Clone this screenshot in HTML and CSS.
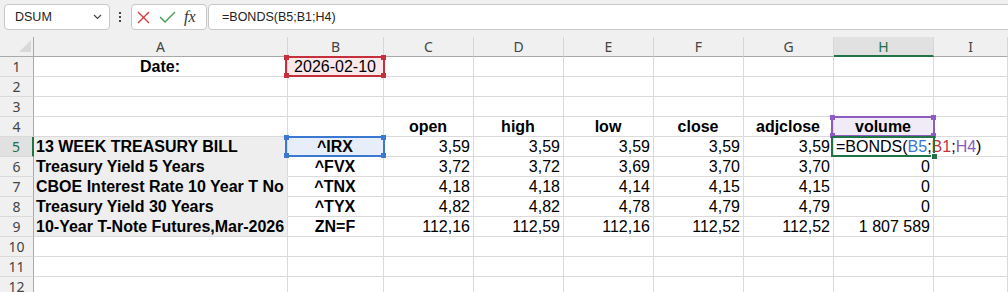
FILE: index.html
```html
<!DOCTYPE html>
<html lang="en">
<head>
    <meta charset="UTF-8">
    <meta name="viewport" content="width=device-width, initial-scale=1.0">
    <title>Bonds sheet</title>
    <link rel="stylesheet" href="styles.css">
</head>
<body>
    <div class="formula-bar">
        <div class="name-box">
            <span>DSUM</span>
            <svg class="chev" width="9" height="6" viewBox="0 0 9 6"><path d="M1 1l3.5 3.5L8 1" fill="none" stroke="#444" stroke-width="1.2"/></svg>
        </div>
        <div class="more"><i></i><i></i><i></i></div>
        <div class="fx-box">
            <svg class="cancel" width="13" height="13" viewBox="0 0 13 13"><path d="M1 1l11 11M12 1L1 12" stroke="#d6393f" stroke-width="1.4"/></svg>
            <svg class="enter" width="17" height="12" viewBox="0 0 17 12"><path d="M1 6l5 5L16 1" fill="none" stroke="#3f9f4a" stroke-width="1.4"/></svg>
            <span class="fx">fx</span>
        </div>
        <div class="formula-input">=BONDS(B5;B1;H4)</div>
    </div>

    <div class="sheet">
        <div class="row">
            <div class="corner"></div>
            <div class="ch">A</div><div class="ch">B</div><div class="ch">C</div><div class="ch">D</div><div class="ch">E</div>
            <div class="ch">F</div><div class="ch">G</div><div class="ch sel">H</div><div class="ch">I</div>
        </div>
        <div class="row">
            <div class="rh">1</div>
            <div class="c b ctr">Date:</div>
            <div class="c ctr pink over">2026-02-10
                <div class="ref red"><i class="k tl"></i><i class="k tr"></i><i class="k bl"></i><i class="k br"></i></div>
            </div>
            <div class="c"></div><div class="c"></div><div class="c"></div><div class="c"></div><div class="c"></div><div class="c"></div><div class="c"></div>
        </div>
        <div class="row">
            <div class="rh">2</div>
            <div class="c"></div><div class="c"></div><div class="c"></div><div class="c"></div><div class="c"></div><div class="c"></div><div class="c"></div><div class="c"></div><div class="c"></div>
        </div>
        <div class="row">
            <div class="rh">3</div>
            <div class="c"></div><div class="c"></div><div class="c"></div><div class="c"></div><div class="c"></div><div class="c"></div><div class="c"></div><div class="c"></div><div class="c"></div>
        </div>
        <div class="row">
            <div class="rh">4</div>
            <div class="c"></div><div class="c"></div>
            <div class="c b ctr">open</div>
            <div class="c b ctr">high</div>
            <div class="c b ctr">low</div>
            <div class="c b ctr">close</div>
            <div class="c b ctr">adjclose</div>
            <div class="c b ctr lilac over">volume
                <div class="ref purple"><i class="k tl"></i><i class="k tr"></i><i class="k bl"></i><i class="k br"></i></div>
            </div>
            <div class="c"></div>
        </div>
        <div class="row">
            <div class="rh sel">5</div>
            <div class="c b grey">13 WEEK TREASURY BILL</div>
            <div class="c b ctr blue-fill over">^IRX
                <div class="ref blue"><i class="k tl"></i><i class="k tr"></i><i class="k bl"></i><i class="k br"></i></div>
            </div>
            <div class="c num">3,59</div><div class="c num">3,59</div><div class="c num">3,59</div><div class="c num">3,59</div><div class="c num">3,59</div>
            <div class="c over active">=BONDS(<span class="t-blue">B5</span>;<span class="t-red">B1</span>;<span class="t-purple">H4</span>)
                <div class="cursor"><i class="handle"></i></div>
            </div>
            <div class="c"></div>
        </div>
        <div class="row">
            <div class="rh">6</div>
            <div class="c b grey">Treasury Yield 5 Years</div>
            <div class="c b ctr">^FVX</div>
            <div class="c num">3,72</div><div class="c num">3,72</div><div class="c num">3,69</div><div class="c num">3,70</div><div class="c num">3,70</div>
            <div class="c num">0</div>
            <div class="c"></div>
        </div>
        <div class="row">
            <div class="rh">7</div>
            <div class="c b grey">CBOE Interest Rate 10 Year T No</div>
            <div class="c b ctr">^TNX</div>
            <div class="c num">4,18</div><div class="c num">4,18</div><div class="c num">4,14</div><div class="c num">4,15</div><div class="c num">4,15</div>
            <div class="c num">0</div>
            <div class="c"></div>
        </div>
        <div class="row">
            <div class="rh">8</div>
            <div class="c b grey">Treasury Yield 30 Years</div>
            <div class="c b ctr">^TYX</div>
            <div class="c num">4,82</div><div class="c num">4,82</div><div class="c num">4,78</div><div class="c num">4,79</div><div class="c num">4,79</div>
            <div class="c num">0</div>
            <div class="c"></div>
        </div>
        <div class="row">
            <div class="rh">9</div>
            <div class="c b grey last">10-Year T-Note Futures,Mar-2026</div>
            <div class="c b ctr">ZN=F</div>
            <div class="c num">112,16</div><div class="c num">112,59</div><div class="c num">112,16</div><div class="c num">112,52</div><div class="c num">112,52</div>
            <div class="c num">1 807 589</div>
            <div class="c"></div>
        </div>
        <div class="row">
            <div class="rh">10</div>
            <div class="c"></div><div class="c"></div><div class="c"></div><div class="c"></div><div class="c"></div><div class="c"></div><div class="c"></div><div class="c"></div><div class="c"></div>
        </div>
        <div class="row">
            <div class="rh">11</div>
            <div class="c"></div><div class="c"></div><div class="c"></div><div class="c"></div><div class="c"></div><div class="c"></div><div class="c"></div><div class="c"></div><div class="c"></div>
        </div>
        <div class="row">
            <div class="rh">12</div>
            <div class="c"></div><div class="c"></div><div class="c"></div><div class="c"></div><div class="c"></div><div class="c"></div><div class="c"></div><div class="c"></div><div class="c"></div>
        </div>
    </div>
</body>
</html>
```

FILE: styles.css
```css
body {
    margin: 0;
    background-color: #f0f0f0;
    font-family: "Liberation Sans", Arial, sans-serif;
    color: #000;
    overflow: hidden;
}

/* formula bar */
.formula-bar {
    display: flex;
    align-items: flex-start;
    height: 37px;
    padding: 4px 0 0 4px;
    box-sizing: border-box;
}
.name-box, .fx-box, .formula-input {
    height: 26px;
    box-sizing: border-box;
    border: 1px solid #c8c8c8;
    border-radius: 4px;
    background-color: #fff;
}
.name-box {
    width: 106px;
    display: flex;
    align-items: center;
    justify-content: space-between;
    padding: 0 7px 0 10px;
    font-size: 12.5px;
    color: #222;
}
.more {
    width: 19px;
    height: 26px;
    display: flex;
    flex-direction: column;
    align-items: center;
    justify-content: center;
    gap: 2px;
}
.more i {
    width: 2px;
    height: 2px;
    background-color: #444;
}
.fx-box {
    width: 76px;
    margin-left: 2px;
    display: flex;
    align-items: center;
    padding-left: 5px;
}
.enter {
    margin-left: 9px;
}
.fx {
    margin-left: 8px;
    font-family: "Liberation Serif", serif;
    font-style: italic;
    font-size: 16px;
    color: #333;
}
.formula-input {
    flex: 1;
    margin-left: 1px;
    margin-right: -8px;
    padding-left: 13px;
    font-size: 12.5px;
    line-height: 24px;
    color: #222;
}

/* grid */
.row {
    display: grid;
    grid-template-columns: 34px 254px 96px 90px 90px 90px 90px 90px 100px 1fr;
    height: 20px;
}
.row > div {
    box-sizing: border-box;
    height: 20px;
}
.corner {
    position: relative;
    background-color: #f0f0f0;
    border-right: 1px solid #a9a9a9;
    border-bottom: 1px solid #a9a9a9;
}
.corner::after {
    content: "";
    position: absolute;
    right: 2px;
    bottom: 4px;
    border-left: 12px solid transparent;
    border-bottom: 12px solid #d9d9d9;
}
.ch {
    background-color: #f0f0f0;
    border-right: 1px solid #d6d6d6;
    border-bottom: 1px solid #a9a9a9;
    text-align: center;
    font-family: "Noto Sans", sans-serif;
    font-size: 14px;
    line-height: 19px;
    color: #444;
}
.ch.sel {
    background-color: #e1e1e1;
    border-bottom: 2px solid #217346;
    color: #1d6f47;
}
.rh {
    background-color: #f0f0f0;
    border-right: 1px solid #a9a9a9;
    border-bottom: 1px solid #dadada;
    text-align: center;
    font-family: "Noto Sans", sans-serif;
    font-size: 14px;
    line-height: 19px;
    color: #444;
}
.rh.sel {
    background-color: #e1e1e1;
    border-right: 2px solid #217346;
    color: #1d6f47;
}
.c {
    background-color: #fff;
    border-right: 1px solid #dadada;
    border-bottom: 1px solid #dadada;
    padding: 0 3px 0 2px;
    font-size: 16px;
    line-height: 19px;
    white-space: nowrap;
    overflow: hidden;
}
.b {
    font-weight: bold;
}
.ctr {
    text-align: center;
}
.num {
    text-align: right;
}
.grey {
    background-color: #eeeeee;
    border-bottom-color: #eeeeee;
}
.grey.last {
    border-bottom-color: #dadada;
}
.pink {
    background-color: #fbe9ea;
}
.lilac {
    background-color: #f0ebf7;
}
.blue-fill {
    background-color: #e8eef9;
}
.over {
    position: relative;
    overflow: visible;
    z-index: 1;
}

/* reference outlines */
.ref, .cursor {
    position: absolute;
    left: -3px;
    top: -1px;
    right: -2px;
    bottom: -1px;
    border: 2px solid;
}
.ref.red { border-color: #c4313d; color: #c4313d; }
.ref.blue { border-color: #3a78d1; color: #3a78d1; }
.ref.purple { border-color: #8c5cc0; color: #8c5cc0; }
.k {
    position: absolute;
    width: 5px;
    height: 5px;
    background-color: currentColor;
}
.k.tl { left: -3px; top: -3px; }
.k.tr { right: -3px; top: -3px; }
.k.bl { left: -3px; bottom: -3px; }
.k.br { right: -3px; bottom: -3px; }
.cursor {
    border-color: #217346;
}
.handle {
    position: absolute;
    right: -5px;
    bottom: -5px;
    width: 5px;
    height: 5px;
    background-color: #217346;
    border: 1px solid #fff;
}
.t-blue { color: #3a78d1; }
.t-red { color: #c4313d; }
.t-purple { color: #8c5cc0; }
```
